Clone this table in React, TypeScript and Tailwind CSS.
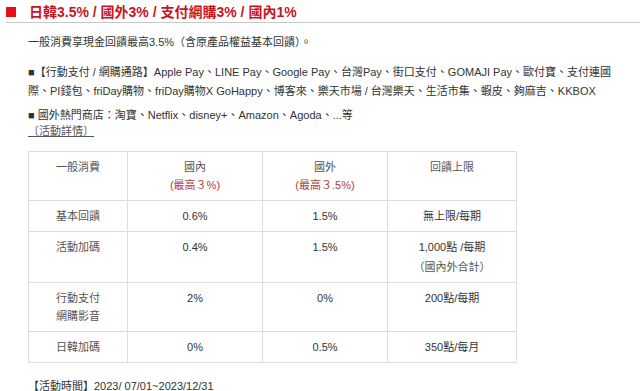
export default function App() {
  const rows = [
    { label: ["基本回饋"], dom: "0.6%", intl: "1.5%", cap: ["無上限/每期"], h: "h-[30px]" },
    { label: ["活動加碼"], dom: "0.4%", intl: "1.5%", cap: ["1,000點 /每期", "（國內外合計）"], h: "h-[50px]" },
    { label: ["行動支付", "網購影音"], dom: "2%", intl: "0%", cap: ["200點/每期"], h: "h-[49px]" },
    { label: ["日韓加碼"], dom: "0%", intl: "0.5%", cap: ["350點/每月"], h: "h-[30px]" },
  ];

  return (
    <div className="w-[640px] h-[391px] overflow-hidden bg-white text-[#333] font-['Liberation_Sans','Noto_Sans_CJK_TC',sans-serif]">
      <div className="ml-[6px] h-[23px] flex items-start border-b border-[#c8c8c8]">
        <div className="mt-[7px] w-[10px] h-[10px] bg-[#e5101a]" />
        <h1 className="ml-[13px] mt-[3px] text-[14px] leading-[18px] font-bold text-[#c9141f]">
          日韓3.5% / 國外3% / 支付網購3% / 國內1%
        </h1>
      </div>

      <div className="pl-[28px] pr-[10px] text-[11px]">
        <p className="mt-[10px] leading-[19px]">一般消費享現金回饋最高3.5%（含原產品權益基本回饋）。</p>

        <p className="mt-[11px] leading-[19px]">
          ■【行動支付 / 網購通路】Apple Pay、LINE Pay、Google Pay、台灣Pay、街口支付、GOMAJI Pay、歐付寶、支付連國際、PI錢包、friDay購物、friDay購物X GoHappy、博客來、樂天市場 / 台灣樂天、生活市集、蝦皮、夠麻吉、KKBOX
        </p>

        <div className="mt-[6px] leading-[16px]">
          <p>■ 國外熱門商店：淘寶、Netflix、disney+、Amazon、Agoda、...等</p>
          <a className="underline text-[#555]">〔活動詳情〕</a>
        </div>

        <table className="mt-[12px] w-[488px] table-fixed border-collapse text-center leading-[18px]">
          <colgroup>
            <col className="w-[99px]" />
            <col className="w-[135px]" />
            <col className="w-[125px]" />
            <col className="w-[129px]" />
          </colgroup>
          <thead>
            <tr className="h-[48px]">
              <td className="border border-[#ddd] align-top py-[6px] text-[#555]">一般消費</td>
              <td className="border border-[#ddd] align-top py-[6px] text-[#555]">
                國內
                <br />
                <span className="text-[#b23a3a]">(最高３%)</span>
              </td>
              <td className="border border-[#ddd] align-top py-[6px] text-[#555]">
                國外
                <br />
                <span className="text-[#b23a3a]">(最高３.5%)</span>
              </td>
              <td className="border border-[#ddd] align-top py-[6px] text-[#555]">回饋上限</td>
            </tr>
          </thead>
          <tbody>
            {rows.map((r) => (
              <tr key={r.label.join("")} className={r.h}>
                <td className="border border-[#ddd] align-top py-[6px] text-[#555]">
                  {r.label.map((l) => (
                    <div key={l}>{l}</div>
                  ))}
                </td>
                <td className="border border-[#ddd] align-top py-[6px]">{r.dom}</td>
                <td className="border border-[#ddd] align-top py-[6px]">{r.intl}</td>
                <td className="border border-[#ddd] align-top py-[6px]">
                  {r.cap.map((c, i) => (
                    <div key={c} className={i > 0 ? "mt-[2px] text-[#555]" : ""}>{c}</div>
                  ))}
                </td>
              </tr>
            ))}
          </tbody>
        </table>

        <p className="mt-[14px] leading-[19px]">【活動時間】2023/ 07/01~2023/12/31</p>
      </div>
    </div>
  );
}
